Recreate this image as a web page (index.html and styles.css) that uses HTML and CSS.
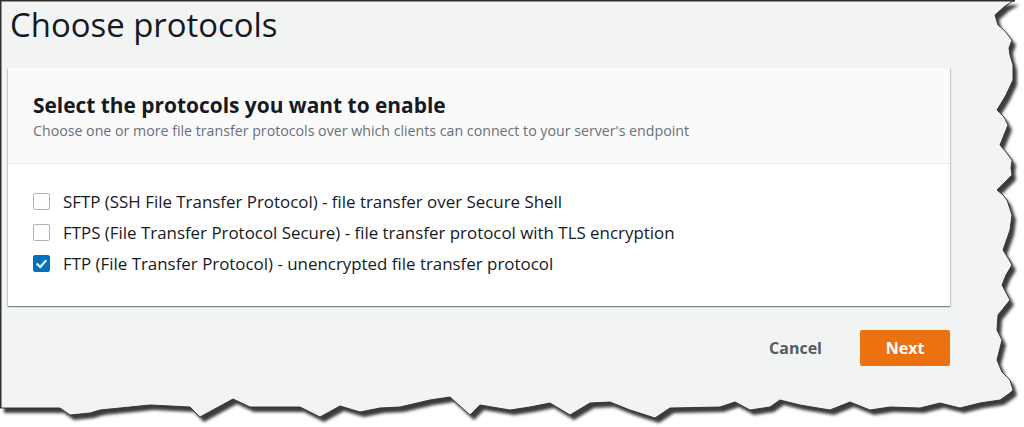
FILE: index.html
```html
<!DOCTYPE html>
<html lang="en">
<head>
<meta charset="utf-8">
<title>Choose protocols</title>
<link rel="stylesheet" href="styles.css">
</head>
<body>
<div class="page">
  <h1 class="title">Choose protocols</h1>
  <section class="card">
    <header class="card-header">
      <h2 class="card-title">Select the protocols you want to enable</h2>
      <p class="card-desc">Choose one or more file transfer protocols over which clients can connect to your server's endpoint</p>
    </header>
    <div class="card-body">
      <label class="option"><span class="box"></span><span class="label">SFTP (SSH File Transfer Protocol) - file transfer over Secure Shell</span></label>
      <label class="option"><span class="box"></span><span class="label">FTPS (File Transfer Protocol Secure) - file transfer protocol with TLS encryption</span></label>
      <label class="option"><span class="box checked"><svg width="16" height="16" viewBox="0 0 16 16"><path d="M3.6 8.2 L6.6 11.2 L12.4 4.8" fill="none" stroke="#fff" stroke-width="2.2" stroke-linecap="square"/></svg></span><span class="label">FTP (File Transfer Protocol) - unencrypted file transfer protocol</span></label>
    </div>
  </section>
  <div class="actions">
    <button class="btn-link">Cancel</button>
    <button class="btn-primary">Next</button>
  </div>
</div>
<svg class="torn" width="1024" height="427" viewBox="0 0 1024 427">
  <defs>
    <path id="paper" d="M0,0 L1015,0 L1005,6 L995,15 L998,25 L1004,30 L1012,40 L1009,48 L1010,55 L1013,65 L1013,80 L1006,95 L997,110 L1004,117 L1008,125 L1000,145 L1006,152 L1012,160 L1011,168 L1012,175 L1004,183 L997,190 L1003,195 L1007,200 L1012,215 L1010,230 L1003,250 L1008,258 L1012,265 L1006,275 L1002,285 L1010,300 L998,315 L997,330 L1002,340 L997,360 L1002,372 L1010,380 L1013,390 L1010,393 L1003,398 L1000,400 L980,403 L960,408 L940,403 L920,408 L890,407 L870,410 L850,402 L830,410 L800,405 L780,400 L770,407 L750,410 L735,402 L720,407 L670,408 L655,418 L630,410 L610,402 L590,403 L570,415 L550,403 L530,407 L510,410 L480,405 L470,415 L450,397 L430,400 L400,407 L380,408 L360,412 L340,406 L320,417 L300,407 L250,407 L233,399 L200,417 L190,407 L150,405 L100,410 L90,413 L70,415 L60,408 L0,408 Z"/>
    <filter id="soft" x="-5%" y="-5%" width="110%" height="110%"><feGaussianBlur stdDeviation="1.6"/></filter>
    <mask id="outside"><rect width="1024" height="427" fill="#fff"/><use href="#paper" fill="#000"/></mask>
  </defs>
  <g mask="url(#outside)">
    <rect width="1024" height="427" fill="#fff"/>
    <use href="#paper" transform="translate(4,5)" fill="#3a3a3a" filter="url(#soft)"/>
  </g>
  <use href="#paper" fill="none" stroke="#2e2e2e" stroke-width="0.9"/>
  <rect x="0" y="0" width="1015" height="1.5" fill="#2e2e2e"/>
  <rect x="0" y="0" width="1.5" height="408" fill="#2e2e2e"/>
</svg>
</body>
</html>
```

FILE: styles.css
```css
* { box-sizing: border-box; }
html, body { margin: 0; padding: 0; }
body {
  width: 1024px;
  height: 427px;
  overflow: hidden;
  background: #f2f3f3;
  font-family: "Open Sans", "Noto Sans", sans-serif;
  color: #16191f;
  position: relative;
}
.page {
  padding: 5px 0 0 8px;
  width: 958px;
}
.title {
  margin: 0 0 0 2px;
  font-size: 32.9px;
  line-height: 40px;
  font-weight: 400;
  color: #16191f;
}
.card {
  margin-top: 23px;
  width: 942px;
  background: #fff;
  box-shadow: 0 1px 1px 0 rgba(0,28,36,.3), 1px 1px 1px 0 rgba(0,28,36,.15), -1px 1px 1px 0 rgba(0,28,36,.15);
}
.card-header {
  background: #fafafa;
  border-bottom: 1px solid #eaeded;
  padding: 23px 24px 22px 25px;
}
.card-title {
  margin: 0;
  font-size: 20.9px;
  line-height: 28px;
  font-weight: 700;
}
.card-desc {
  margin: 2px 0 0;
  font-size: 14.2px;
  line-height: 20px;
  color: #687078;
}
.card-body {
  padding: 22px 24px 27px 25px;
  display: flex;
  flex-direction: column;
}
.option {
  display: flex;
  align-items: center;
  gap: 13px;
  height: 31px;
  font-size: 16.9px;
  line-height: 31px;
}
.box {
  width: 17px;
  height: 17px;
  border: 1px solid #aab7b8;
  border-radius: 2px;
  background: #fff;
  flex: none;
  display: flex;
  align-items: center;
  justify-content: center;
}
.box.checked {
  background: #0073bb;
  border-color: #0073bb;
}
.actions {
  margin-top: 24px;
  width: 942px;
  display: flex;
  justify-content: flex-end;
  align-items: center;
  gap: 18px;
}
.btn-link, .btn-primary {
  font-family: "Open Sans", "Noto Sans", sans-serif;
  font-weight: 700;
  font-size: 16px;
  height: 36px;
  border: none;
  cursor: pointer;
}
.btn-link {
  background: transparent;
  color: #545b64;
  padding: 0 20px;
}
.btn-primary {
  width: 90px;
  background: #ec7211;
  color: #fff;
  border-radius: 2px;
}
.torn {
  position: absolute;
  left: 0;
  top: 0;
  pointer-events: none;
}
```
